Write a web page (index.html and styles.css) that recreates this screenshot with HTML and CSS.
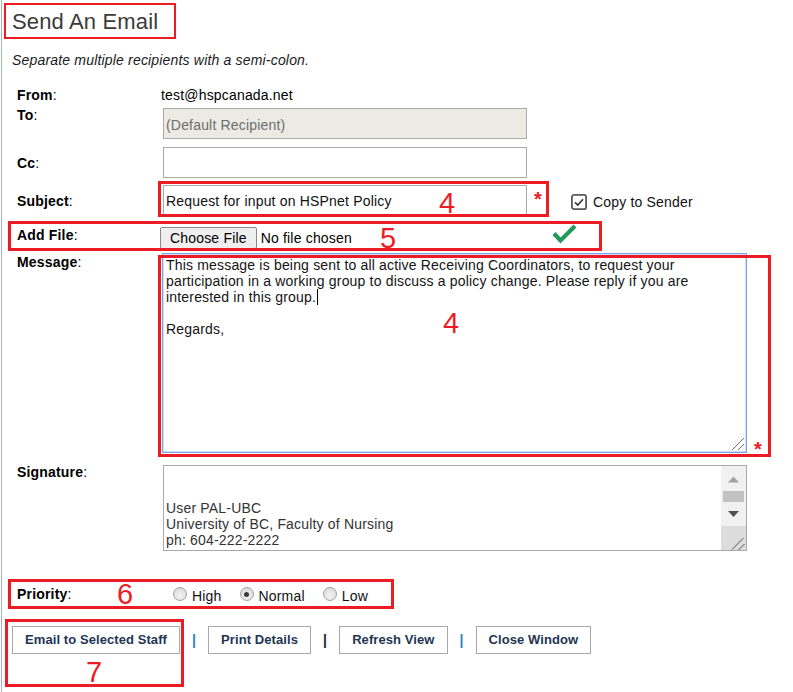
FILE: index.html
```html
<!DOCTYPE html>
<html lang="en">
<head>
<meta charset="utf-8">
<title>Send An Email</title>
<link rel="stylesheet" href="styles.css">
</head>
<body>
<div class="page">
  <div class="title-box"><h1 class="title">Send An Email</h1></div>
  <p class="hint">Separate multiple recipients with a semi-colon.</p>

  <div class="form">
    <div class="row row-from">
      <div class="lbl"><b>From</b>:</div>
      <div class="val">test@hspcanada.net</div>
    </div>

    <div class="row row-to">
      <div class="lbl"><b>To</b>:</div>
      <div class="field field-disabled">(Default Recipient)</div>
    </div>

    <div class="row row-cc">
      <div class="lbl"><b>Cc</b>:</div>
      <div class="field"></div>
    </div>

    <div class="row row-subject">
      <div class="lbl"><b>Subject</b>:</div>
      <div class="field field-subject">Request for input on HSPnet Policy</div>
      <span class="req req-top">*</span>
      <span class="copy">
        <svg class="checkbox" width="16" height="16" viewBox="0 0 16 16">
          <rect x="0.9" y="0.9" width="14.2" height="14.2" rx="2.2" fill="#fff" stroke="#5a5a5a" stroke-width="1.8"/>
          <path d="M4 8.3 L6.8 11 L12 5.2" fill="none" stroke="#333" stroke-width="1.6"/>
        </svg>
        <span class="copy-text">Copy to Sender</span>
      </span>
    </div>

    <div class="row row-file">
      <div class="lbl"><b>Add File</b>:</div>
      <span class="file-btn">Choose File</span>
      <span class="file-name">No file chosen</span>
    </div>

    <div class="row row-message">
      <div class="lbl lbl-message"><b>Message</b>:</div>
      <div class="msg">
        <div class="msg-text">This message is being sent to all active Receiving Coordinators, to request your<br>participation in a working group to discuss a policy change. Please reply if you are<br>interested in this group.<span class="caret"></span><br><br>Regards,</div>
        <svg class="grip" width="14" height="14" viewBox="0 0 14 14">
          <path d="M13 1 L1 13 M13 7 L7 13" stroke="#6b6b6b" stroke-width="1" fill="none"/>
        </svg>
      </div>
      <span class="req req-bottom">*</span>
    </div>

    <div class="row row-signature">
      <div class="lbl lbl-signature"><b>Signature</b>:</div>
      <div class="sig">
        <div class="sig-text">&nbsp;<br>&nbsp;<br>User PAL-UBC<br>University of BC, Faculty of Nursing<br>ph: 604-222-2222</div>
        <svg class="scrollbar" width="25" height="84" viewBox="0 0 25 84">
          <rect x="0" y="0" width="25" height="60" fill="#f1f1f1"/>
          <polygon points="7,16.5 12.5,10.5 18,16.5" fill="#a3a3a3"/>
          <rect x="2" y="25" width="21" height="11" fill="#c1c1c1"/>
          <polygon points="7,45 18,45 12.5,51" fill="#505050"/>
          <rect x="0" y="60" width="25" height="24" fill="#dcdcdc"/>
          <path d="M22.5 72 L11 83.5 M23.5 78 L17.5 84" stroke="#555" stroke-width="1" fill="none"/>
        </svg>
      </div>
    </div>

    <div class="row row-priority">
      <div class="lbl"><b>Priority</b>:</div>
      <div class="radios">
        <span class="radio-item"><span class="radio"></span><span class="radio-text">High</span></span>
        <span class="radio-item"><span class="radio on"></span><span class="radio-text">Normal</span></span>
        <span class="radio-item"><span class="radio"></span><span class="radio-text">Low</span></span>
      </div>
    </div>
  </div>

  <div class="actions">
    <button class="btn" type="button">Email to Selected Staff</button>
    <span class="pipe">|</span>
    <button class="btn" type="button">Print Details</button>
    <span class="pipe pipe-dark">|</span>
    <button class="btn" type="button">Refresh View</button>
    <span class="pipe">|</span>
    <button class="btn" type="button">Close Window</button>
  </div>
</div>

<div class="notes">
  <div class="box box-subject"></div>
  <div class="box box-file"></div>
  <div class="box box-message"></div>
  <div class="box box-priority"></div>
  <div class="box box-send"></div>
  <span class="num num-subject">4</span>
  <span class="num num-file">5</span>
  <span class="num num-message">4</span>
  <span class="num num-priority">6</span>
  <span class="num num-send">7</span>
  <svg class="ok" width="26" height="20" viewBox="0 0 26 20">
    <path d="M2 9.5 L8.5 16.5 L23 2" fill="none" stroke="#23995a" stroke-width="4.2"/>
  </svg>
</div>
</body>
</html>
```

FILE: styles.css
```css
* { box-sizing: border-box; }

html, body {
  margin: 0;
  padding: 0;
  background: #fff;
}

body {
  position: relative;
  width: 793px;
  height: 692px;
  overflow: hidden;
  font-family: "Liberation Sans", Arial, sans-serif;
  font-size: 14px;
  line-height: 16px;
  letter-spacing: 0.18px;
  color: #000;
}

.page {
  margin-left: 1px;
  border-left: 1px solid #9fb3c9;
  min-height: 692px;
  padding-top: 3px;
}

.title-box {
  margin-left: 2px;
  width: 172px;
  height: 36px;
  border: 2px solid #ed1c24;
  padding-left: 6px;
}

.title {
  margin: 0;
  font-size: 22px;
  font-weight: normal;
  line-height: 34px;
  letter-spacing: 0.15px;
  color: #3a3a3a;
}

.hint {
  margin: 13px 0 0 10px;
  font-style: italic;
  color: #1a1a1a;
}

.form { padding-left: 15px; }

.row { display: flex; }

.lbl {
  width: 144px;
  flex: none;
}

.row-from { margin-top: 19px; }

.row-to {
  margin-top: 4px;
  align-items: flex-start;
}

.field {
  flex: none;
  margin-left: 2px;
  width: 364px;
  height: 31px;
  border: 1px solid #a9a9a9;
  padding: 0 2px;
  background: #fff;
}

.field-disabled {
  margin-top: 1px;
  padding-top: 8px;
  background: #ebebe4;
  color: #6d6d6d;
}

.row-cc {
  margin-top: 8px;
  align-items: center;
}

.row-subject {
  margin-top: 7px;
  align-items: center;
}

.field-subject {
  padding-top: 7px;
  color: #111;
}

.req {
  color: #ed1c24;
  font-weight: bold;
  font-size: 20px;
  line-height: 20px;
}

.req-top {
  align-self: flex-start;
  margin: 4px 0 0 7px;
}

.copy {
  display: flex;
  align-items: center;
  margin-left: 29px;
  padding-top: 3px;
}

.checkbox {
  display: block;
  margin-right: 6px;
}

.copy-text { color: #111; }

.row-file {
  margin-top: 11px;
  align-items: flex-start;
}

.file-btn {
  margin-left: -1px;
  height: 22px;
  line-height: 20px;
  padding: 0 9px;
  border: 1px solid #8a8a8a;
  border-radius: 2px;
  background: #efefef;
  color: #000;
}

.file-name {
  margin-left: 4px;
  line-height: 22px;
}

.row-message {
  margin-top: 4px;
  align-items: flex-start;
}

.lbl-message { padding-top: 1px; }

.msg {
  position: relative;
  flex: none;
  margin-left: 1px;
  width: 585px;
  height: 200px;
  border: 1px solid #7ba5ea;
  box-shadow: inset 0 0 0 1px #cfdef8;
  padding: 3px;
  background: #fff;
}

.msg-text { color: #141414; }

.caret {
  display: inline-block;
  width: 1px;
  height: 16px;
  margin-left: 1px;
  vertical-align: -3px;
  background: #000;
}

.grip {
  position: absolute;
  right: 1px;
  bottom: 1px;
}

.req-bottom {
  align-self: flex-end;
  margin: 0 0 -6px 7px;
}

.row-signature { margin-top: 12px; }

.lbl-signature { margin-top: -1px; }

.sig {
  display: flex;
  flex: none;
  margin-left: 2px;
  width: 584px;
  height: 86px;
  border: 1px solid #a9a9a9;
  background: #fff;
}

.sig-text {
  flex: 1;
  padding: 2px 2px;
  color: #333;
}

.scrollbar {
  display: block;
  flex: none;
}

.row-priority { margin-top: 35px; }

.radios {
  display: flex;
  margin-left: 12px;
  padding-top: 2px;
}

.radio-item {
  display: flex;
  align-items: flex-start;
  margin-right: 18px;
}

.radio {
  position: relative;
  display: block;
  width: 14px;
  height: 14px;
  margin-top: -1px;
  margin-right: 5px;
  border: 1px solid #a2a2a2;
  border-radius: 50%;
  background: radial-gradient(circle at 50% 65%, #f4f4f4 0%, #dedede 70%, #cfcfcf 100%);
}

.radio.on::after {
  content: "";
  position: absolute;
  left: 3.5px;
  top: 3.5px;
  width: 5px;
  height: 5px;
  border-radius: 50%;
  background: #3c3c3c;
}

.radio-text { color: #111; }

.actions {
  display: flex;
  align-items: center;
  margin-top: 22px;
  padding-left: 10px;
}

.btn {
  height: 28px;
  margin: 0;
  padding: 0 12px;
  border: 1px solid #a9a9a9;
  border-radius: 0;
  background: #fff;
  font-family: "Liberation Sans", Arial, sans-serif;
  font-size: 13px;
  font-weight: bold;
  line-height: 26px;
  letter-spacing: 0.08px;
  color: #1e3553;
}

.pipe {
  margin: 0 12px;
  font-size: 14px;
  font-weight: bold;
  color: #2b7fc3;
}

.pipe-dark { color: #222; }

/* annotation overlay */
.notes {
  position: absolute;
  left: 0;
  top: 0;
  width: 793px;
  height: 692px;
  pointer-events: none;
  letter-spacing: 0;
}

.box {
  position: absolute;
  border: 3px solid #ed1c24;
}

.box-subject { left: 158px; top: 181px; width: 391px; height: 36px; }
.box-file { left: 8px; top: 221px; width: 594px; height: 30px; }
.box-message { left: 158px; top: 255px; width: 613px; height: 202px; }
.box-priority { left: 8px; top: 579px; width: 386px; height: 30px; }
.box-send { left: 5px; top: 619px; width: 179px; height: 68px; }

.num {
  position: absolute;
  font-size: 29px;
  line-height: 29px;
  color: #ed1c24;
}

.num-subject { left: 439px; top: 189px; }
.num-file { left: 380px; top: 224px; }
.num-message { left: 443px; top: 309px; }
.num-priority { left: 117px; top: 580px; }
.num-send { left: 86px; top: 658px; }

.ok {
  position: absolute;
  left: 552px;
  top: 224px;
}
```
